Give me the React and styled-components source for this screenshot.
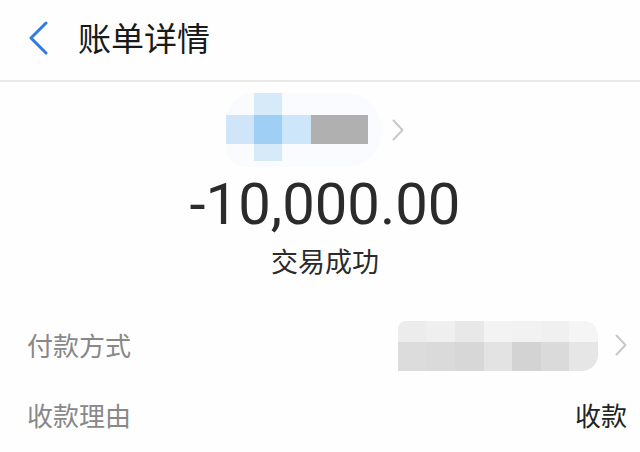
import React from "react";
import styled, { createGlobalStyle } from "styled-components";

const Global = createGlobalStyle`
  html, body { margin: 0; padding: 0; background: #fefefe; }
  body { font-family: "Noto Sans CJK SC", "Noto Sans", sans-serif; overflow: hidden; }
`;

const Page = styled.div`
  width: 640px;
  height: 452px;
  background: #fefefe;
  display: flex;
  flex-direction: column;
`;

const Header = styled.header`
  display: flex;
  align-items: center;
  padding-left: 27px;
  border-bottom: 2px solid #e8e8e8;
  box-sizing: border-box;
  height: 82px;
`;

const BackButton = styled.div`
  width: 24px;
  height: 36px;
  display: flex;
  align-items: center;
  margin-right: 27px;
  margin-top: -4px;
`;

const Title = styled.h1`
  margin: 0;
  font-size: 33px;
  font-weight: 400;
  color: #1a1a1a;
  line-height: 1;
  margin-top: -5px;
`;

const Summary = styled.section`
  display: flex;
  flex-direction: column;
  align-items: center;
  padding-top: 11px;
`;

const NameRow = styled.div`
  display: flex;
  align-items: center;
  gap: 10px;
  height: 74px;
  margin-left: -10px;
`;

const NameMosaic = styled.div`
  position: relative;
  width: 156px;
  height: 74px;
`;

const Haze = styled.div`
  position: absolute;
  left: 0;
  top: 0;
  width: 156px;
  height: 74px;
  border-radius: 30px 40px 40px 20px;
  background: #f9fbfe;
`;

const Cell = styled.div`
  position: absolute;
  left: ${(p) => p.$x}px;
  top: ${(p) => p.$y}px;
  width: ${(p) => p.$w}px;
  height: ${(p) => p.$h}px;
  background: ${(p) => p.$c};
`;

const Amount = styled.div`
  font-family: Roboto, "Liberation Sans", sans-serif;
  font-size: 58px;
  color: #2b2b2b;
  line-height: 1;
  margin-top: 8px;
  margin-left: 10px;
`;

const Status = styled.div`
  font-size: 27px;
  color: #2b2b2b;
  margin-top: 14px;
  margin-left: 10px;
  line-height: 1;
`;

const Rows = styled.section`
  display: flex;
  flex-direction: column;
  margin-top: 36px;
`;

const Row = styled.div`
  height: 70px;
  display: flex;
  align-items: center;
  justify-content: space-between;
  padding: 0 13px 0 27px;
`;

const Label = styled.span`
  font-size: 26px;
  color: #888888;
  line-height: 1;
`;

const Value = styled.span`
  font-size: 26px;
  color: #222222;
  line-height: 1;
`;

const ValueGroup = styled.div`
  display: flex;
  align-items: center;
  gap: 17px;
`;

const PayMosaic = styled.div`
  display: grid;
  grid-template-columns: repeat(7, 28.6px);
  grid-template-rows: 21px 29px;
  border-radius: 8px 14px 16px 0;
  overflow: hidden;
  margin-top: 2px;
`;

const Tile = styled.div`
  background: ${(p) => p.$c};
`;

const Chevron = ({ color = "#c8c8c8", w = 12, h = 22, sw = 2 }) => (
  <svg width={w} height={h} viewBox="0 0 12 22" fill="none">
    <path d="M1.5 1.5 L10.5 11 L1.5 20.5" stroke={color} strokeWidth={sw} strokeLinecap="round" strokeLinejoin="round" />
  </svg>
);

const topTiles = ["#ececec", "#efefef", "#e8e8e8", "#f3f3f3", "#f2f2f2", "#f0f0f0", "#f5f5f5"];
const bottomTiles = ["#dcdcdc", "#dadada", "#d7d7d7", "#e3e3e3", "#d3d3d3", "#dadada", "#e6e6e6"];

export default function App() {
  return (
    <Page>
      <Global />
      <Header>
        <BackButton>
          <svg width="22" height="34" viewBox="0 0 22 34" fill="none">
            <path d="M19 2 L4 17 L19 32" stroke="#2f7be5" strokeWidth="3" strokeLinecap="round" strokeLinejoin="round" />
          </svg>
        </BackButton>
        <Title>账单详情</Title>
      </Header>
      <Summary>
        <NameRow>
          <NameMosaic>
            <Haze />
            <Cell $x={28} $y={0} $w={28} $h={68} $c="#d7eafa" />
            <Cell $x={0} $y={22} $w={28} $h={29} $c="#d0e6f8" />
            <Cell $x={28} $y={22} $w={28} $h={29} $c="#9fcff5" />
            <Cell $x={56} $y={22} $w={29} $h={29} $c="#cde6fa" />
            <Cell $x={85} $y={22} $w={57} $h={29} $c="#b0b0b0" />
          </NameMosaic>
          <Chevron w={12} h={22} />
        </NameRow>
        <Amount>-10,000.00</Amount>
        <Status>交易成功</Status>
      </Summary>
      <Rows>
        <Row>
          <Label>付款方式</Label>
          <ValueGroup>
            <PayMosaic>
              {topTiles.map((c, i) => (
                <Tile key={"t" + i} $c={c} />
              ))}
              {bottomTiles.map((c, i) => (
                <Tile key={"b" + i} $c={c} />
              ))}
            </PayMosaic>
            <Chevron w={12} h={22} />
          </ValueGroup>
        </Row>
        <Row>
          <Label>收款理由</Label>
          <Value>收款</Value>
        </Row>
      </Rows>
    </Page>
  );
}
